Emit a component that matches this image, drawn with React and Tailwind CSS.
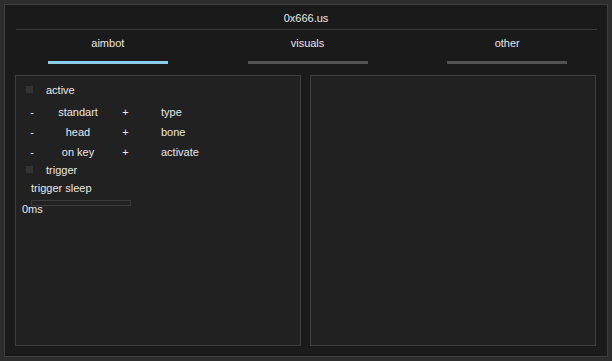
import React from 'react'

const tabs = [
  { label: 'aimbot', active: true },
  { label: 'visuals', active: false },
  { label: 'other', active: false },
]

const rows = [
  { value: 'standart', name: 'type' },
  { value: 'head', name: 'bone' },
  { value: 'on key', name: 'activate' },
]

const Checkbox = () => <div className="w-[7px] h-[7px] bg-[#333333]"></div>

export default function App() {
  return (
    <div
      className="w-[612px] h-[361px] bg-[#2d2d2d] p-[4px] text-[11px] text-[#e8e8e8]"
      style={{ fontFamily: '"Liberation Sans", Arial, sans-serif' }}
    >
      <div className="w-full h-full border border-[#3e3e3e] bg-[#1a1a1a] flex flex-col">
        {/* Title */}
        <div className="h-[24px] flex items-center justify-center leading-[14px] pt-[1px]">0x666.us</div>
        <div className="h-px bg-[#3a3a3a] ml-[11px] mr-[10px]"></div>

        {/* Tabs */}
        <div className="flex pl-[3px] pt-[6px]">
          {tabs.map((tab) => (
            <div key={tab.label} className="w-[200px] flex flex-col items-center">
              <span className="h-[14px] leading-[14px]">{tab.label}</span>
              <div
                className={`mt-[11px] w-[120px] h-[3px] ${
                  tab.active ? 'bg-[#8acde9]' : 'bg-[#525252]'
                }`}
              ></div>
            </div>
          ))}
        </div>

        {/* Panels */}
        <div className="flex gap-[9px] pl-[10px] mt-[11px]">
          <div className="w-[286px] h-[271px] border border-[#3e3e3e] bg-[#212121] flex flex-col pt-[8px]">
            <div className="h-[11px] flex items-center pl-[10px] gap-[13px]">
              <Checkbox />
              <span className="leading-[14px]">active</span>
            </div>

            <div className="mt-[7px] flex flex-col">
              {rows.map((row) => (
                <div key={row.name} className="h-[20px] flex items-center pl-[12px] leading-[14px]">
                  <span className="w-[8px] text-center">-</span>
                  <span className="w-[84px] text-center">{row.value}</span>
                  <span className="w-[11px] text-center">+</span>
                  <span className="ml-[30px]">{row.name}</span>
                </div>
              ))}
            </div>

            <div className="mt-[2px] h-[11px] flex items-center pl-[10px] gap-[13px]">
              <Checkbox />
              <span className="leading-[14px]">trigger</span>
            </div>

            <div className="mt-[6px] h-[14px] leading-[14px] pl-[15px]">trigger sleep</div>
            <div className="mt-[5px] ml-[15px] w-[100px] h-[6px] border border-[#3a3a3a]"></div>
            <div className="mt-[-4px] h-[14px] leading-[14px] pl-[6px]">0ms</div>
          </div>

          <div className="w-[286px] h-[271px] border border-[#3e3e3e] bg-[#212121]"></div>
        </div>
      </div>
    </div>
  )
}
